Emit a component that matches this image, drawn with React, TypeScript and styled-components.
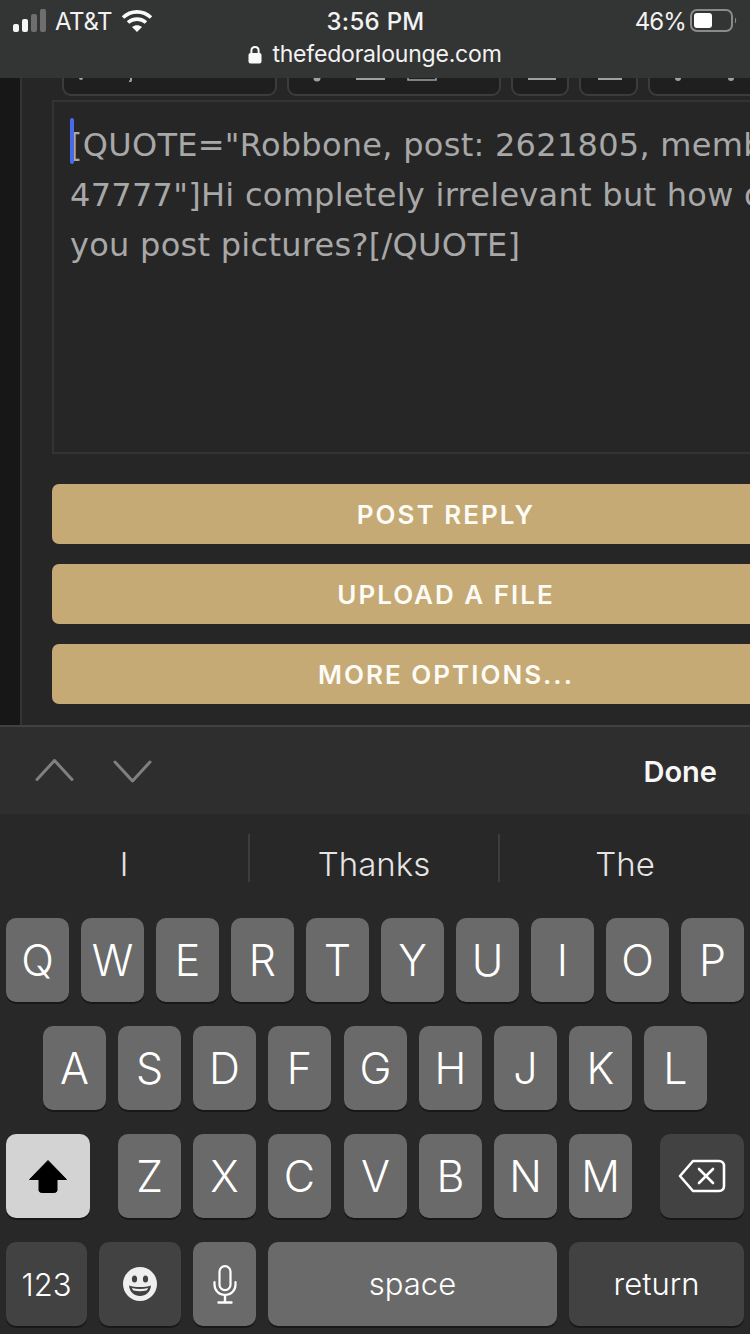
import React from "react";
import styled, { createGlobalStyle } from "styled-components";

const Global = createGlobalStyle`
  html, body { margin: 0; padding: 0; background: #262626; }
  #root { width: 750px; height: 1334px; overflow: hidden; }
  * { box-sizing: border-box; }
`;

const Page = styled.div`
  width: 750px;
  height: 1334px;
  display: flex;
  flex-direction: column;
  overflow: hidden;
  opacity: 0.999;
  font-family: Inter, "Liberation Sans", sans-serif;
`;

const Header = styled.header`
  height: 78px;
  flex: none;
  background: #333434;
  color: #f2f2f2;
  display: flex;
  flex-direction: column;
`;

const StatusBar = styled.div`
  height: 40px;
  display: grid;
  grid-template-columns: 1fr auto 1fr;
  align-items: center;
  padding: 2px 12px 0 13px;
`;

const StatusLeft = styled.div`
  display: flex;
  align-items: center;
  gap: 8px;
  font-size: 24px;
`;

const StatusRight = styled.div`
  display: flex;
  align-items: center;
  justify-content: flex-end;
  gap: 4px;
  font-size: 24px;
  letter-spacing: -0.9px;
`;

const Clock = styled.div`
  font-size: 24px;
  font-weight: 500;
  letter-spacing: 0.3px;
`;

const Carrier = styled.span`
  margin-right: 1px;
  letter-spacing: -0.4px;
`;

const UrlRow = styled.div`
  height: 28px;
  display: flex;
  align-items: center;
  justify-content: center;
  gap: 10px;
  font-size: 23px;
  letter-spacing: -0.2px;
`;

const Main = styled.main`
  height: 647px;
  flex: none;
  display: flex;
  overflow: hidden;
  background: #262626;
`;

const SideStrip = styled.div`
  width: 22px;
  flex: none;
  background: #171717;
  border-right: 2px solid #343434;
`;

const Column = styled.div`
  width: 786px;
  flex: none;
  margin-left: 30px;
  display: flex;
  flex-direction: column;
`;

const Toolbar = styled.div`
  height: 22px;
  flex: none;
  display: flex;
  gap: 10px;
  padding-left: 10px;
`;

const ToolButton = styled.div<{ $w: number }>`
  width: ${(p) => p.$w}px;
  height: 18px;
  flex: none;
  background: #1f1f1f;
  border: 2px solid #3c3c3c;
  border-top: none;
  border-radius: 0 0 9px 9px;
  overflow: hidden;
`;

const ToolMarks = styled.svg`
  display: block;
  width: 100%;
  height: 4px;
`;

const Editor = styled.div`
  position: relative;
  height: 354px;
  flex: none;
  border: 2px solid #333333;
  background: #262626;
  padding: 18px 16px 0 16px;
  overflow: hidden;
  color: #a8a8a8;
  font-family: "DejaVu Sans", Verdana, sans-serif;
  font-size: 32px;
  line-height: 50px;
  letter-spacing: 0.28px;
`;

const EditorLine = styled.div`
  white-space: nowrap;
`;

const Caret = styled.div`
  position: absolute;
  left: 16px;
  top: 16px;
  width: 4px;
  height: 46px;
  border-radius: 2px;
  background: #4a69e6;
`;

const Actions = styled.div`
  display: flex;
  flex-direction: column;
  gap: 20px;
  margin-top: 30px;
`;

const ActionButton = styled.div`
  height: 60px;
  border-radius: 7px;
  background: #c5aa75;
  color: #fdfbf6;
  display: flex;
  align-items: center;
  justify-content: center;
  padding-left: 2px;
  font-size: 26px;
  font-weight: 600;
  letter-spacing: 2px;
`;

const Accessory = styled.div`
  height: 89px;
  flex: none;
  background: #2e2e2e;
  border-top: 2px solid #414141;
  display: flex;
  align-items: center;
  justify-content: space-between;
  padding: 0 33px 0 35px;
`;

const Chevrons = styled.div`
  display: flex;
  gap: 39px;
`;

const Done = styled.div`
  color: #f7f7f7;
  font-size: 29px;
  font-weight: 600;
  padding-top: 2px;
`;

const Keyboard = styled.div`
  flex: 1;
  background: #282828;
  color: #fff;
`;

const Predictions = styled.div`
  height: 104px;
  display: grid;
  grid-template-columns: 250px 250px 250px;
  padding-top: 20px;
`;

const Prediction = styled.div<{ $divider?: boolean }>`
  height: 48px;
  display: flex;
  align-items: center;
  justify-content: center;
  font-size: 33px;
  font-weight: 300;
  color: #e4e4e4;
  padding-top: 12px;
  border-right: ${(p) => (p.$divider ? "2px solid #3d3d3d" : "none")};
`;

const Rows = styled.div`
  display: flex;
  flex-direction: column;
  gap: 24px;
`;

const Row = styled.div<{ $left?: number }>`
  height: 84px;
  display: flex;
  gap: 12px;
  padding-left: ${(p) => p.$left ?? 6}px;
`;

const Key = styled.div<{ $w?: number; $tone?: "light" | "dark" | "white"; $ml?: number; $size?: number }>`
  width: ${(p) => p.$w ?? 63}px;
  height: 84px;
  flex: none;
  margin-left: ${(p) => p.$ml ?? 0}px;
  border-radius: 10px;
  display: flex;
  align-items: center;
  justify-content: center;
  font-size: ${(p) => p.$size ?? 43}px;
  font-weight: 300;
  color: #fff;
  background: ${(p) => (p.$tone === "dark" ? "#424242" : p.$tone === "white" ? "#d3d3d3" : "#6a6a6a")};
  box-shadow: 0 2px 0 #181818;
`;

const KeyLabel = styled.span`
  margin-top: -2px;
`;

const Signal = () => (
  <svg width="34" height="24" viewBox="0 0 34 24">
    <rect x="0" y="15" width="6" height="8" rx="2" fill="#f5f5f5" />
    <rect x="9" y="10" width="6" height="13" rx="2" fill="#f5f5f5" />
    <rect x="18" y="5" width="6" height="18" rx="2" fill="#6e6e6e" />
    <rect x="27" y="0" width="6" height="23" rx="2" fill="#6e6e6e" />
  </svg>
);

const Wifi = () => (
  <svg width="32" height="24" viewBox="0 0 32 24" fill="none">
    <path d="M2 8.5C10 1 22 1 30 8.5" stroke="#fafafa" strokeWidth="3.6" />
    <path d="M7 13.5C12 9 20 9 25 13.5" stroke="#fafafa" strokeWidth="3.6" />
    <path d="M11 18L16 23L21 18C18 15.5 14 15.5 11 18Z" fill="#fafafa" />
  </svg>
);

const Battery = () => (
  <svg width="48" height="24" viewBox="0 0 48 24" fill="none">
    <rect x="1" y="1" width="41" height="21" rx="6" stroke="#8a8a8a" strokeWidth="2" />
    <rect x="4" y="4" width="18" height="15" rx="3" fill="#fff" />
    <path d="M45 8.5C46.5 9.5 46.5 13.5 45 14.5Z" fill="#8a8a8a" />
  </svg>
);

const Lock = () => (
  <svg width="14" height="19" viewBox="0 0 14 19" fill="none">
    <path d="M3.4 9V5.5C3.4 0.7 10.6 0.7 10.6 5.5V9" stroke="#fafafa" strokeWidth="2" />
    <rect x="0.5" y="8" width="13" height="10.5" rx="2" fill="#fafafa" />
  </svg>
);

const Up = () => (
  <svg width="39" height="24" viewBox="0 0 39 24" fill="none">
    <path d="M2 20.5L19.5 1.5L37 20.5" stroke="#808080" strokeWidth="3" strokeLinecap="round" strokeLinejoin="round" />
  </svg>
);

const Down = () => (
  <svg width="39" height="24" viewBox="0 0 39 24" fill="none">
    <path d="M2 3L19.5 22L37 3" stroke="#808080" strokeWidth="3" strokeLinecap="round" strokeLinejoin="round" />
  </svg>
);

const ShiftIcon = () => (
  <svg width="38" height="33" viewBox="0 0 38 33">
    <path
      d="M19 0.5L37.5 19.5H28V30C28 31.5 27 32.5 25.5 32.5H12.5C11 32.5 10 31.5 10 30V19.5H0.5Z"
      fill="#000"
      stroke="#000"
      strokeLinejoin="round"
    />
  </svg>
);

const DeleteIcon = () => (
  <svg width="48" height="34" viewBox="0 0 48 34" fill="none" stroke="#fff" strokeWidth="2.6">
    <path d="M15 2H41C44 2 46 4 46 7V27C46 30 44 32 41 32H15L2 17Z" strokeLinejoin="round" />
    <path d="M21 10L35 24M35 10L21 24" strokeLinecap="round" />
  </svg>
);

const EmojiIcon = () => (
  <svg width="34" height="34" viewBox="0 0 34 34">
    <circle cx="17" cy="17" r="17" fill="#efefef" />
    <ellipse cx="11.5" cy="12" rx="2.6" ry="3.6" fill="#424242" />
    <ellipse cx="22.5" cy="12" rx="2.6" ry="3.6" fill="#424242" />
    <path d="M6 18.5C12 20.5 22 20.5 28 18.5C27.5 25 22.5 29 17 29C11.5 29 6.5 25 6 18.5Z" fill="#424242" />
    <path d="M9 21C14 22.2 20 22.2 25 21C24.5 22.5 24 23 23.5 23.5C19 24.4 15 24.4 10.5 23.5C10 23 9.4 22.5 9 21Z" fill="#efefef" />
  </svg>
);

const MicIcon = () => (
  <svg width="24" height="39" viewBox="0 0 24 39" fill="none" stroke="#fff" strokeWidth="2.2" strokeLinecap="round">
    <rect x="6.5" y="1.2" width="11" height="24" rx="5.5" />
    <path d="M1.5 17V19.5C1.5 25.5 6 30 12 30C18 30 22.5 25.5 22.5 19.5V17" />
    <path d="M12 30V37M5.5 37.5H18.5" strokeWidth="2.4" />
  </svg>
);

const tools: { w: number; marks: React.ReactNode }[] = [
  { w: 215, marks: <><circle cx="17" cy="0" r="2" fill="#a0a0a0" /><path d="M67 0V2C67 3 66 3.5 65 3.5" stroke="#a0a0a0" strokeWidth="2" fill="none" /></> },
  { w: 214, marks: <><circle cx="28" cy="0" r="3.5" fill="#a0a0a0" /><rect x="67" y="0" width="29" height="2" fill="#a0a0a0" /><path d="M119 0V2H147V0" stroke="#a0a0a0" strokeWidth="1.5" fill="none" /></> },
  { w: 58, marks: <rect x="15" y="0" width="28" height="2" fill="#a0a0a0" /> },
  { w: 59, marks: <rect x="17" y="0" width="24" height="2" fill="#a0a0a0" /> },
  { w: 180, marks: <><circle cx="28" cy="0" r="3" fill="#a0a0a0" /><circle cx="81" cy="0" r="3" fill="#a0a0a0" /></> },
];

const rowOne = ["Q", "W", "E", "R", "T", "Y", "U", "I", "O", "P"];
const rowTwo = ["A", "S", "D", "F", "G", "H", "J", "K", "L"];
const rowThree = ["Z", "X", "C", "V", "B", "N", "M"];

export default function App() {
  return (
    <Page>
      <Global />
      <Header>
        <StatusBar>
          <StatusLeft>
            <Signal />
            <Carrier>AT&amp;T</Carrier>
            <Wifi />
          </StatusLeft>
          <Clock>3:56 PM</Clock>
          <StatusRight>
            <span>46%</span>
            <Battery />
          </StatusRight>
        </StatusBar>
        <UrlRow>
          <Lock />
          <span>thefedoralounge.com</span>
        </UrlRow>
      </Header>
      <Main>
        <SideStrip />
        <Column>
          <Toolbar>
            {tools.map((t, i) => (
              <ToolButton key={i} $w={t.w}>
                <ToolMarks viewBox={`0 0 ${t.w - 4} 4`} preserveAspectRatio="xMinYMin slice">
                  {t.marks}
                </ToolMarks>
              </ToolButton>
            ))}
          </Toolbar>
          <Editor>
            <Caret />
            <EditorLine>[QUOTE="Robbone, post: 2621805, member:</EditorLine>
            <EditorLine>47777"]Hi completely irrelevant but how do</EditorLine>
            <EditorLine>you post pictures?[/QUOTE]</EditorLine>
          </Editor>
          <Actions>
            <ActionButton>POST REPLY</ActionButton>
            <ActionButton>UPLOAD A FILE</ActionButton>
            <ActionButton>MORE OPTIONS...</ActionButton>
          </Actions>
        </Column>
      </Main>
      <Accessory>
        <Chevrons>
          <Up />
          <Down />
        </Chevrons>
        <Done>Done</Done>
      </Accessory>
      <Keyboard>
        <Predictions>
          <Prediction $divider>I</Prediction>
          <Prediction $divider>Thanks</Prediction>
          <Prediction>The</Prediction>
        </Predictions>
        <Rows>
          <Row>
            {rowOne.map((k) => (
              <Key key={k}>{k}</Key>
            ))}
          </Row>
          <Row $left={43}>
            {rowTwo.map((k, i) => (
              <Key key={k} $ml={i === 4 ? 1 : 0}>
                {k}
              </Key>
            ))}
          </Row>
          <Row>
            <Key $w={84} $tone="white">
              <ShiftIcon />
            </Key>
            {rowThree.map((k, i) => (
              <Key key={k} $ml={i === 0 ? 16 : i === 3 ? 1 : 0}>
                {k}
              </Key>
            ))}
            <Key $w={84} $tone="dark" $ml={16}>
              <DeleteIcon />
            </Key>
          </Row>
          <Row>
            <Key $w={81} $tone="dark" $size={31}>
              123
            </Key>
            <Key $w={82} $tone="dark">
              <EmojiIcon />
            </Key>
            <Key>
              <MicIcon />
            </Key>
            <Key $w={289} $size={31}>
              <KeyLabel>space</KeyLabel>
            </Key>
            <Key $w={175} $tone="dark" $size={31}>
              <KeyLabel>return</KeyLabel>
            </Key>
          </Row>
        </Rows>
      </Keyboard>
    </Page>
  );
}
